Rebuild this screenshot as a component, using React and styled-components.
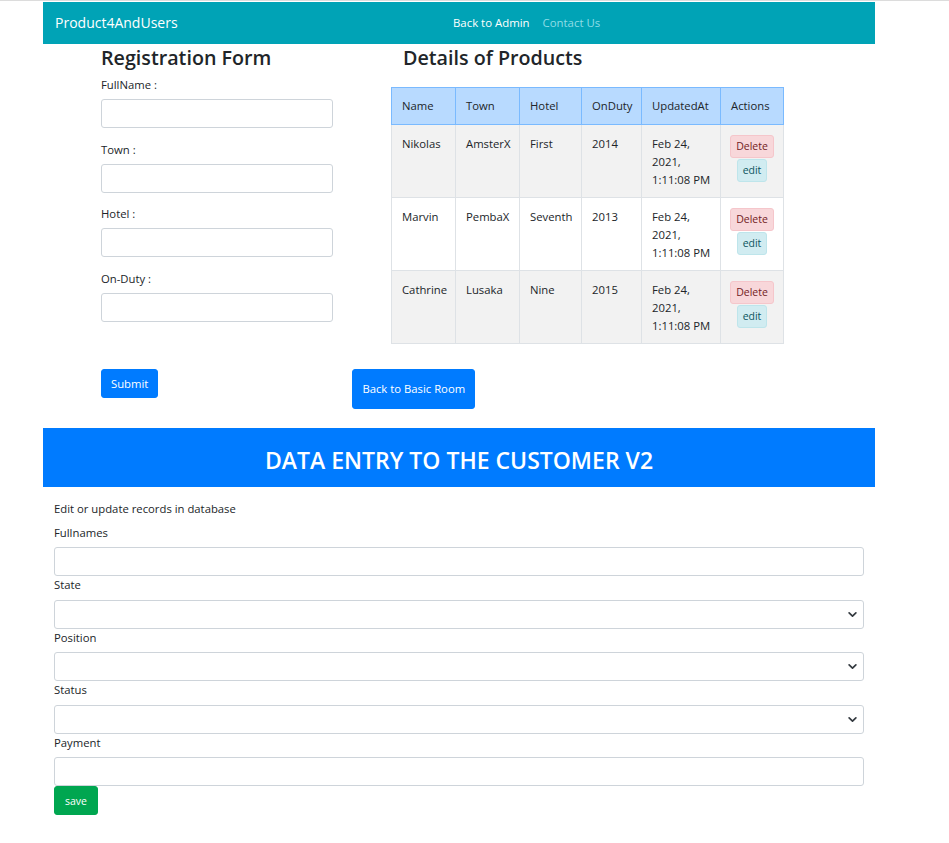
import React from 'react'
import styled, { createGlobalStyle } from 'styled-components'

const GlobalStyle = createGlobalStyle`
  html, body {
    margin: 0;
    padding: 0;
    background: #fff;
  }
  body {
    font-family: "Open Sans", "Noto Sans", sans-serif;
    font-size: 11.3px;
    line-height: 18px;
    color: #212529;
    border-top: 1px solid #dcdcdc;
  }
  * { box-sizing: border-box; }
`

const Page = styled.div`
  width: 832px;
  margin-left: 43px;
  padding-top: 1px;
`

const NavBar = styled.nav`
  height: 42px;
  background: #00a3b6;
  display: flex;
  align-items: center;
  padding: 0 12px;
`

const Brand = styled.span`
  color: #fff;
  font-size: 14px;
  width: 398px;
`

const NavLinks = styled.div`
  display: flex;
  gap: 13px;
  font-size: 11.4px;
`

const NavLink = styled.a`
  color: ${p => (p.$muted ? '#8fdde6' : '#fff')};
  text-decoration: none;
`

const Top = styled.div`
  display: flex;
  padding-left: 58px;
`

const LeftCol = styled.div`
  width: 232px;
`

const RightCol = styled.div`
  margin-left: 58px;
`

const Heading = styled.h3`
  margin: 1px 0 0;
  font-size: 19.7px;
  font-weight: 600;
  line-height: 26px;
  padding-left: ${p => p.$indent || 0}px;
`

const Field = styled.div`
  margin-top: ${p => p.$first ? 5 : 12.5}px;
`

const Label = styled.label`
  display: block;
  line-height: 18px;
  margin-bottom: ${p => p.$tight ? 5.5 : 5}px;
`

const Input = styled.input`
  display: block;
  width: 100%;
  height: 29px;
  border: 1px solid #ced4da;
  border-radius: 3px;
  background: #fff;
  font: inherit;
`

const SelectWrap = styled.div`
  position: relative;
`

const Select = styled.select`
  display: block;
  width: 100%;
  height: 29px;
  border: 1px solid #ced4da;
  border-radius: 3px;
  background: #fff;
  appearance: none;
  font: inherit;
`

const Chevron = styled.svg`
  position: absolute;
  right: 7px;
  top: 11px;
  width: 9px;
  height: 7px;
  pointer-events: none;
`

const Table = styled.table`
  margin-top: 16px;
  border-collapse: collapse;
  table-layout: fixed;
  width: 392px;
  line-height: 18px;
`

const Th = styled.th`
  background: #b8daff;
  border: 1px solid #7abaff;
  font-weight: 400;
  text-align: left;
  padding: 9px 6px 9px 10px;
  height: 37px;
`

const Row = styled.tr`
  background: ${p => (p.$striped ? '#f2f2f2' : '#fff')};
`

const Td = styled.td`
  border: 1px solid #dee2e6;
  vertical-align: top;
  padding: 10px 4px 8px 10px;
  text-align: ${p => (p.$center ? 'center' : 'left')};
  ${p => p.$center && 'padding: 10px 0 8px;'}
`

const SmallBtn = styled.button`
  display: block;
  margin: 0 auto 1px;
  font: inherit;
  font-size: 10.5px;
  line-height: 15px;
  padding: 3px 5px;
  border-radius: 3px;
  border: 1px solid ${p => (p.$kind === 'danger' ? '#f5c6cb' : '#bee5eb')};
  background: ${p => (p.$kind === 'danger' ? '#f8d7da' : '#d1ecf1')};
  color: ${p => (p.$kind === 'danger' ? '#721c24' : '#0c5460')};
`

const ButtonRow = styled.div`
  display: flex;
  align-items: flex-start;
  padding-left: 58px;
  margin-top: 25px;
`

const PrimaryBtn = styled.button`
  font: inherit;
  color: #fff;
  background: #007bff;
  border: 1px solid #007bff;
  border-radius: 3px;
  padding: ${p => (p.$tall ? '10px 9px' : '4.5px 9px')};
  margin-left: ${p => p.$offset || 0}px;
  line-height: 18px;
`

const Banner = styled.div`
  margin-top: 19px;
  height: 59px;
  padding-top: 4px;
  background: #007bff;
  color: #fff;
  display: flex;
  align-items: center;
  justify-content: center;
  font-size: 23px;
  font-weight: 600;
`

const EntryForm = styled.div`
  padding: 13px 11px 0;
`

const Intro = styled.p`
  margin: 0 0 6px;
`

const SaveBtn = styled.button`
  display: block;
  font: inherit;
  font-size: 10.5px;
  color: #fff;
  background: #00a650;
  border: 1px solid #00a650;
  border-radius: 3px;
  height: 29px;
  padding: 0 10px;
  margin-bottom: 28px;
`

const products = [
  { name: 'Nikolas', town: 'AmsterX', hotel: 'First', duty: '2014' },
  { name: 'Marvin', town: 'PembaX', hotel: 'Seventh', duty: '2013' },
  { name: 'Cathrine', town: 'Lusaka', hotel: 'Nine', duty: '2015' },
]

const regFields = ['FullName :', 'Town :', 'Hotel :', 'On-Duty :']

function DropDown() {
  return (
    <SelectWrap>
      <Select defaultValue="">
        <option value=""></option>
      </Select>
      <Chevron viewBox="0 0 16 12">
        <path d="M2 3l6 6 6-6" fill="none" stroke="#343a40" strokeWidth="3" strokeLinecap="round" strokeLinejoin="round" />
      </Chevron>
    </SelectWrap>
  )
}

export default function App() {
  return (
    <>
      <GlobalStyle />
      <Page>
        <NavBar>
          <Brand>Product4AndUsers</Brand>
          <NavLinks>
            <NavLink href="#">Back to Admin</NavLink>
            <NavLink href="#" $muted>Contact Us</NavLink>
          </NavLinks>
        </NavBar>

        <Top>
          <LeftCol>
            <Heading>Registration Form</Heading>
            {regFields.map((f, i) => (
              <Field key={f} $first={i === 0}>
                <Label>{f}</Label>
                <Input />
              </Field>
            ))}
          </LeftCol>
          <RightCol>
            <Heading $indent={12}>Details of Products</Heading>
            <Table>
              <colgroup>
                <col style={{ width: 64 }} />
                <col style={{ width: 64 }} />
                <col style={{ width: 62 }} />
                <col style={{ width: 60 }} />
                <col style={{ width: 79 }} />
                <col style={{ width: 63 }} />
              </colgroup>
              <thead>
                <tr>
                  <Th>Name</Th>
                  <Th>Town</Th>
                  <Th>Hotel</Th>
                  <Th>OnDuty</Th>
                  <Th>UpdatedAt</Th>
                  <Th>Actions</Th>
                </tr>
              </thead>
              <tbody>
                {products.map((p, i) => (
                  <Row key={p.name} $striped={i % 2 === 0}>
                    <Td>{p.name}</Td>
                    <Td>{p.town}</Td>
                    <Td>{p.hotel}</Td>
                    <Td>{p.duty}</Td>
                    <Td>Feb 24,<br />2021,<br />1:11:08 PM</Td>
                    <Td $center>
                      <SmallBtn $kind="danger">Delete</SmallBtn>
                      <SmallBtn $kind="info">edit</SmallBtn>
                    </Td>
                  </Row>
                ))}
              </tbody>
            </Table>
          </RightCol>
        </Top>

        <ButtonRow>
          <PrimaryBtn>Submit</PrimaryBtn>
          <PrimaryBtn $tall $offset={194}>Back to Basic Room</PrimaryBtn>
        </ButtonRow>

        <Banner>DATA ENTRY TO THE CUSTOMER V2</Banner>

        <EntryForm>
          <Intro>Edit or update records in database</Intro>
          <Label>Fullnames</Label>
          <Input />
          <Label $tight>State</Label>
          <DropDown />
          <Label $tight>Position</Label>
          <DropDown />
          <Label $tight>Status</Label>
          <DropDown />
          <Label $tight>Payment</Label>
          <Input />
          <SaveBtn>save</SaveBtn>
        </EntryForm>
      </Page>
    </>
  )
}
